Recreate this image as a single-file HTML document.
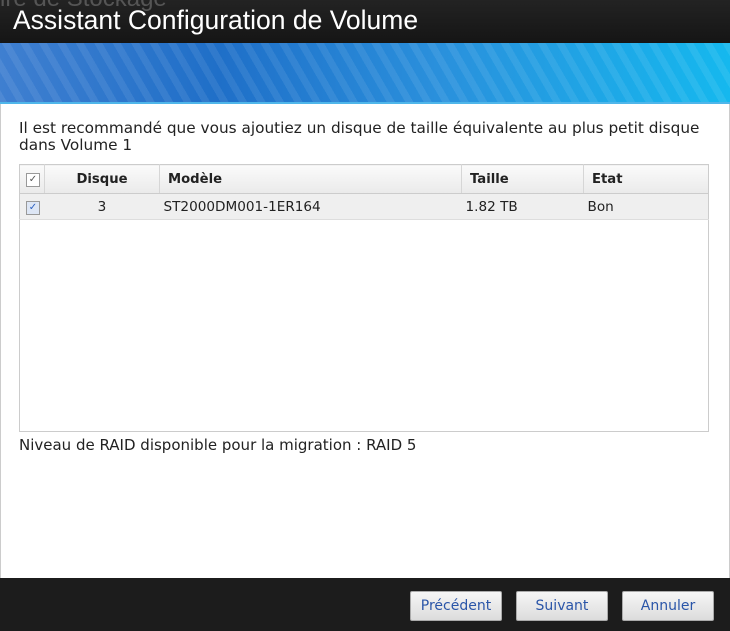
<!DOCTYPE html>
<html><head><meta charset="utf-8"><style>
body{margin:0;width:730px;height:631px;overflow:hidden;background:#fff;font-family:"DejaVu Sans",Verdana,sans-serif;font-size:13.6px;color:#222;position:relative}
.title{position:absolute;left:0;top:0;width:730px;height:43px;background:linear-gradient(#232323,#151515);}
.title span{position:absolute;left:13px;top:5px;font-family:"Liberation Sans",sans-serif;font-size:26.5px;color:#fff}
.ghost{position:absolute;left:0;top:-15px;font-family:"Liberation Sans",sans-serif;font-size:24px;color:#555}
.banner{position:absolute;left:0;top:43px;width:730px;height:61px;background:repeating-linear-gradient(60deg,rgba(255,255,255,0.08) 0 7px,rgba(255,255,255,0) 7px 16px),linear-gradient(90deg,#3f7fd0 0%,#1f6fc8 30%,#2a90dc 60%,#15b8ee 100%);}
.banner:after{content:"";position:absolute;left:0;right:0;bottom:0;height:2px;background:#4fb6ea}
.body{position:absolute;left:0;top:104px;width:728px;height:474px;border-left:1px solid #ccc;border-right:1px solid #ccc}
.msg{position:absolute;left:19px;top:120px;width:700px;line-height:17px;font-size:15.3px}
table{position:absolute;left:19px;top:164px;width:690px;border-collapse:collapse;border:1px solid #ccc}
.tbl{position:absolute;left:19px;top:164px;width:688px;height:266px;border:1px solid #ccc}
th{height:28px;background:linear-gradient(#fafafa,#eaeaea);text-align:left;font-weight:bold;font-size:13.2px;border-right:1px solid #d6d6d6;border-bottom:1px solid #ccc;padding:0 0 0 8px}
td{height:25px;background:#efefef;border-bottom:1px solid #ddd;padding:0 0 0 4px}
.cb{display:inline-block;width:12px;height:12px;border:1px solid #999;background:#fff;font-size:10px;line-height:12px;text-align:center;color:#555}
.raid{position:absolute;left:19px;top:436px;font-size:15px}
.foot{position:absolute;left:0;top:578px;width:730px;height:53px;background:#1c1c1c}
.btn{position:absolute;top:13px;height:28px;width:90px;background:linear-gradient(#f6f6f6,#dcdcdc);border:1px solid #aaa;border-radius:2px;color:#2a55a8;text-align:center;line-height:28px;font-size:14px}
</style></head><body>
<div class="title"><div class="ghost">ire de Stockage</div><span>Assistant Configuration de Volume</span></div>
<div class="banner"></div>
<div class="body"></div>
<div class="msg">Il est recommandé que vous ajoutiez un disque de taille équivalente au plus petit disque dans Volume 1</div>
<div class="tbl"></div>
<table>
<tr><th style="width:18px;padding-left:6px"><span class="cb">✓</span></th><th style="width:114px;text-align:center;padding:0">Disque</th><th style="width:293px">Modèle</th><th style="width:113px">Taille</th><th style="border-right:none">Etat</th></tr>
<tr><td style="padding-left:6px"><span class="cb" style="color:#2a5fc0;background:#dde6f5">✓</span></td><td style="text-align:center;padding:0">3</td><td>ST2000DM001-1ER164</td><td>1.82 TB</td><td>Bon</td></tr>
</table>
<div class="raid">Niveau de RAID disponible pour la migration : RAID 5</div>
<div class="foot">
<div class="btn" style="left:410px">Précédent</div>
<div class="btn" style="left:516px">Suivant</div>
<div class="btn" style="left:622px">Annuler</div>
</div>
</body></html>
